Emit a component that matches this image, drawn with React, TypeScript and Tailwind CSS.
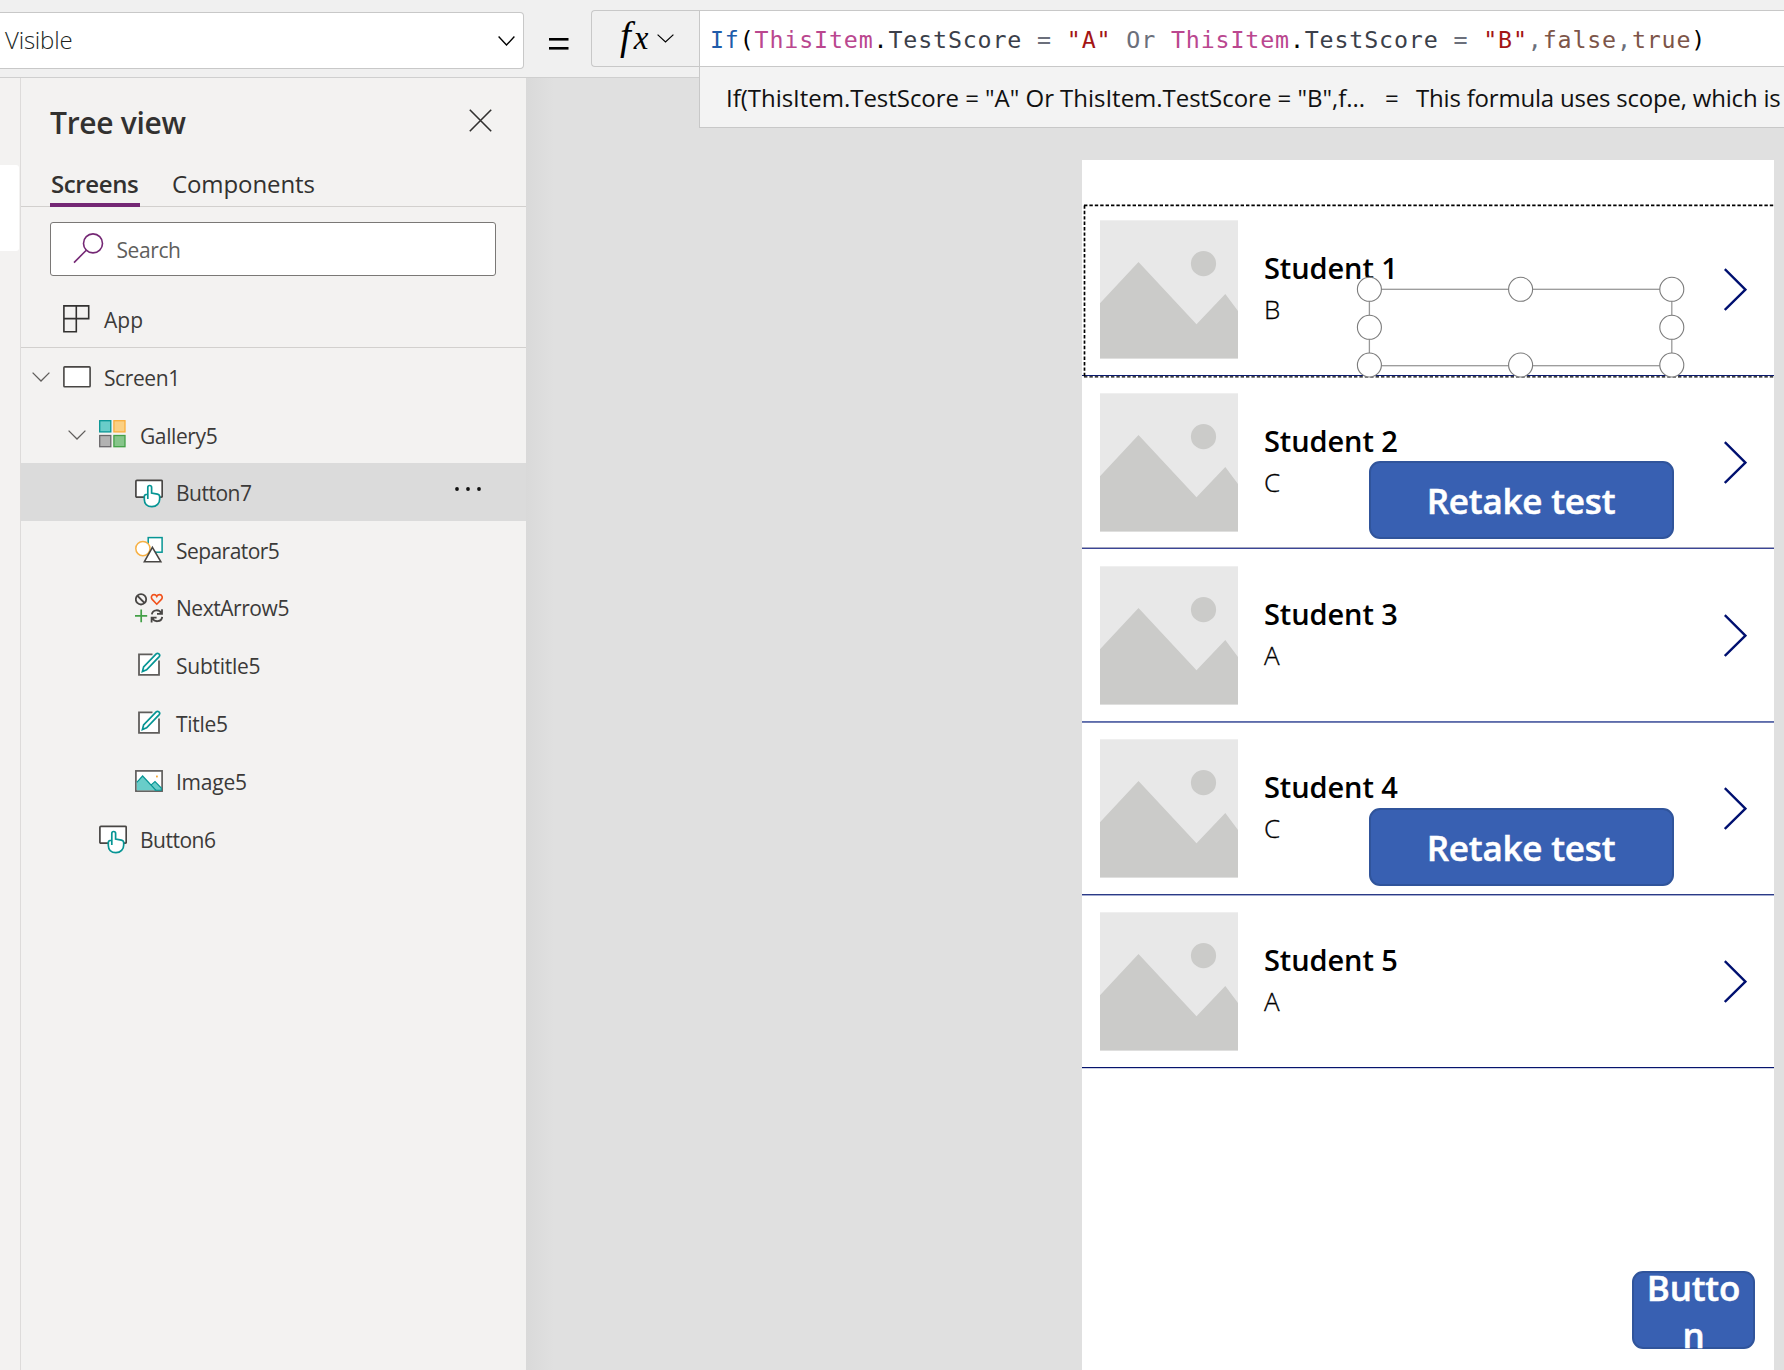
import React from "react";

function Chevron({ className = "", w = 18, h = 10, sw = 1.3 }: { className?: string; w?: number; h?: number; sw?: number }) {
  return (
    <svg className={className} width={w} height={h} viewBox={`0 0 ${w} ${h}`} fill="none" stroke="currentColor" strokeWidth={sw}>
      <path d={`M0.6 0.6 L${w / 2} ${h - 1} L${w - 0.6} 0.6`} />
    </svg>
  );
}

function ButtonIcon() {
  return (
    <svg className="translate-y-px" width="28" height="29" viewBox="0 0 28 29" fill="#fff">
      <rect x="0.9" y="1.4" width="26.3" height="16.8" rx="1" stroke="#484644" strokeWidth="1.7" />
      <path
        d="M12.8 20V8.4a1.9 1.9 0 0 1 3.8 0v5.6l5.8 1.2c1.4.3 2.3 1.2 2.3 2.6v2.2c0 4.2-3 7.7-7.8 7.7s-7.6-3.2-7.6-7.5v-2.6c0-1.7 1.5-2.6 3.5-2.3"
        stroke="#069594"
        strokeWidth="1.7"
      />
    </svg>
  );
}

function ShapesIcon() {
  return (
    <svg width="28" height="28" viewBox="0 0 28 28" fill="#fff">
      <rect x="13.2" y="1.6" width="13.9" height="14.6" stroke="#069594" strokeWidth="1.5" />
      <circle cx="7.9" cy="12.6" r="7.1" stroke="#f7b145" strokeWidth="1.5" />
      <path d="M17.4 11.4 L25.8 25.7 H9.4 Z" stroke="#484644" strokeWidth="1.6" />
    </svg>
  );
}

function IconsIcon() {
  return (
    <svg width="28" height="30" viewBox="0 0 28 30" fill="none">
      <circle cx="6" cy="6.3" r="5.2" stroke="#484644" strokeWidth="1.8" />
      <path d="M2.5 2.8 L9.6 10" stroke="#484644" strokeWidth="1.8" />
      <path
        d="M21.8 11.2 L17.2 6.4 C15.6 4.5 16.6 1.6 19 1.6 C20.4 1.6 21.3 2.4 21.8 3.4 C22.3 2.4 23.2 1.6 24.6 1.6 C27 1.6 28 4.5 26.4 6.4 Z"
        stroke="#f1511b"
        strokeWidth="1.6"
      />
      <path d="M6.2 16.6 V29.2 M0 22.8 H12.2" stroke="#43a047" strokeWidth="1.7" />
      <path
        d="M16.8 21.4 C17.6 16.2 24.4 16 26.2 20.2 M27 16.2 V20.8 H22 M27.2 24 C26.4 29.2 19.4 29.6 17.4 25.2 M16.6 29.4 V24.6 H21.6"
        stroke="#484644"
        strokeWidth="1.8"
      />
    </svg>
  );
}

function EditIcon({ className = "" }: { className?: string }) {
  return (
    <svg className={`ml-[3px] mr-[2px] ${className}`} width="23" height="25" viewBox="0 0 23 25">
      <path d="M14.5 2.4 H1 V22.9 H21 V8.5" fill="#fff" stroke="#605e5c" strokeWidth="1.8" />
      <path d="M4.4 19.6 L5.6 15 L18.2 1.9 C19.8 .3 22.8 2.4 21.2 4.6 L8.6 17.8 Z" fill="#fff" stroke="#069594" strokeWidth="1.7" />
    </svg>
  );
}

function ImageIcon() {
  return (
    <svg width="28" height="22" viewBox="0 0 28 22">
      <rect x="0.9" y="0.9" width="26.2" height="20.2" fill="#fff" stroke="#605e5c" strokeWidth="1.7" />
      <path d="M15.6 15.4 L20 11.6 L26.3 18 V20.2 H20 Z" fill="#69cdc9" stroke="#069594" strokeWidth="1.1" />
      <path d="M1.8 12.4 L7.6 6 L21 20.3 H1.8 Z" fill="#69cdc9" />
      <path d="M1.8 12.4 L7.6 6 L21 20.3" fill="none" stroke="#069594" strokeWidth="1.2" />
      <rect x="21" y="5.6" width="1.8" height="1.8" fill="#f7a531" />
    </svg>
  );
}

function GalleryIcon() {
  return (
    <svg className="-translate-y-px" width="28" height="28" viewBox="0 0 28 28" strokeWidth="1.3">
      <rect x="0.7" y="0.7" width="11.1" height="11.2" fill="#69cdc9" stroke="#069594" />
      <rect x="14.9" y="0.7" width="11.1" height="11.2" fill="#fbd083" stroke="#f9ae3c" />
      <rect x="0.7" y="15.5" width="11.1" height="11.2" fill="#b2b2b2" stroke="#69676a" />
      <rect x="14.9" y="15.5" width="11.1" height="11.2" fill="#86c58a" stroke="#43a047" />
    </svg>
  );
}

function ScreenIcon() {
  return (
    <svg width="28" height="22" viewBox="0 0 28 22">
      <rect x="0.9" y="0.9" width="26.2" height="19.8" rx="0.8" fill="#fff" stroke="#484644" strokeWidth="1.6" />
    </svg>
  );
}

function AppIcon() {
  return (
    <svg width="28" height="28" viewBox="0 0 28 28" fill="none" stroke="#323130" strokeWidth="1.6">
      <path d="M0.9 0.9 H25.7 V13.6 H0.9 Z M13.3 0.9 V26.7 H0.9 V0.9" />
    </svg>
  );
}

type Item = { label: string; icon: React.ReactNode; pad: string; chevron?: boolean; selected?: boolean; text: string };

const ITEMS: Item[] = [
  { label: "Screen1", icon: <ScreenIcon />, pad: "pl-[11px]", chevron: true, text: "ml-[13px] tracking-[-0.4px]" },
  { label: "Gallery5", icon: <GalleryIcon />, pad: "pl-[47px]", chevron: true, text: "ml-[13px] tracking-[-0.4px]" },
  { label: "Button7", icon: <ButtonIcon />, pad: "pl-[114px]", selected: true, text: "ml-[13px] tracking-[-0.5px]" },
  { label: "Separator5", icon: <ShapesIcon />, pad: "pl-[114px]", text: "ml-[13px] tracking-[-0.55px]" },
  { label: "NextArrow5", icon: <IconsIcon />, pad: "pl-[114px]", text: "ml-[13px] pb-px tracking-[-0.45px]" },
  { label: "Subtitle5", icon: <EditIcon className="-translate-y-px" />, pad: "pl-[114px]", text: "ml-[13px] tracking-[-0.25px]" },
  { label: "Title5", icon: <EditIcon />, pad: "pl-[114px]", text: "ml-[13px] tracking-[-0.3px]" },
  { label: "Image5", icon: <ImageIcon />, pad: "pl-[114px]", text: "ml-[13px] tracking-[-0.25px]" },
  { label: "Button6", icon: <ButtonIcon />, pad: "pl-[78px]", text: "ml-[13px] pt-px tracking-[-0.5px]" },
];

function TreeRow({ item }: { item: Item }) {
  return (
    <div className={`flex h-[57.7px] items-center pr-[44px] ${item.pad} ${item.selected ? "bg-[#dbdbdb]" : ""}`}>
      {item.chevron && <Chevron className="mr-[13px] text-[#605e5c]" />}
      {item.icon}
      <span className={`translate-y-px text-[21px] leading-[30px] text-[#3b3a39] ${item.text}`}>{item.label}</span>
      {item.selected && (
        <svg className="ml-auto -translate-y-[3px]" width="28" height="6" viewBox="0 0 28 6" fill="#111">
          <circle cx="3" cy="3" r="1.9" />
          <circle cx="14" cy="3" r="1.9" />
          <circle cx="25" cy="3" r="1.9" />
        </svg>
      )}
    </div>
  );
}

function TreePanel() {
  return (
    <aside className="flex w-[505px] shrink-0 flex-col bg-[#f3f2f1]">
      <div className="flex h-[86px] items-center justify-between pl-[29px] pr-[34px] pt-[3px]">
        <h2 className="text-[30px] font-semibold leading-[40px] tracking-[-0.3px] text-[#323130]">Tree view</h2>
        <svg className="-translate-y-[2px]" width="23" height="23" viewBox="0 0 23 23" fill="none" stroke="#323130" strokeWidth="1.6">
          <path d="M0.8 0.8 L22.2 22.2 M22.2 0.8 L0.8 22.2" />
        </svg>
      </div>
      <div className="flex h-[43px] gap-[32px] border-b border-[#d2d0ce] pl-[29px] text-[24px] leading-[40px] text-[#323130]">
        <div className="h-[43px] w-[90px] border-b-[4px] border-[#742774] pl-[1px] font-semibold tracking-[-0.4px]">Screens</div>
        <div className="tracking-[-0.1px]">Components</div>
      </div>
      <div className="ml-[29px] mt-[15px] flex h-[54px] w-[446px] items-center rounded-[3px] border border-[#7a7876] bg-white pl-[22px]">
        <svg className="-translate-y-px" width="31" height="31" viewBox="0 0 31 31" fill="none" stroke="#742774" strokeWidth="1.6">
          <circle cx="20" cy="10.4" r="9.5" />
          <path d="M13.3 17.2 L1 29.6" />
        </svg>
        <span className="ml-[12.5px] translate-y-px text-[21px] leading-[30px] tracking-[-0.4px] text-[#605e5c]">Search</span>
      </div>
      <div className="flex h-[72px] items-center border-b border-[#d2d0ce] pl-[42px] pt-[14px]">
        <AppIcon />
        <span className="ml-[13px] translate-y-px text-[21px] leading-[30px] text-[#3b3a39]">App</span>
      </div>
      {ITEMS.map((item) => (
        <TreeRow key={item.label} item={item} />
      ))}
    </aside>
  );
}

function FormulaBar() {
  return (
    <header className="relative z-10 flex h-[78px] shrink-0 border-b border-[#cfcfcf] bg-[#f0f0f0]">
      <div className="mt-[12px] flex h-[57px] w-[524px] items-center justify-between rounded-r-[4px] border border-l-0 border-[#c8c8c8] bg-white pl-[5px] pr-[8px]">
        <span className="-translate-y-px text-[24px] font-light leading-[34px] tracking-[-0.2px] text-[#201f1e]">Visible</span>
        <Chevron w={17} h={10} sw={1.4} className="text-black" />
      </div>
      <svg className="ml-[25px] mt-[37px]" width="20" height="15" viewBox="0 0 20 15" fill="#000">
        <rect x="0" y="1" width="19.5" height="2.6" />
        <rect x="0" y="10" width="19.5" height="2.6" />
      </svg>
      <div className="ml-[22px] mt-[10px] flex h-[57px] w-[108px] items-center rounded-l-[4px] border border-r-0 border-[#c8c8c8] bg-[#f0f0f0] pl-[28px]">
        <span className="w-[31px] -translate-y-[2px] whitespace-nowrap font-['Liberation_Serif',serif] text-[39px] italic leading-[44px] text-black">
          f<span className="ml-[3px] text-[33px]">x</span>
        </span>
        <Chevron w={17} h={9} sw={1.2} className="ml-[6px] text-black" />
      </div>
      <div className="relative mt-[10px] h-[57px] flex-1 border border-r-0 border-[#c8c8c8] bg-white">
        <div className="whitespace-pre pl-[10px] pt-[9px] font-['DejaVu_Sans_Mono',monospace] text-[23.3px] leading-[40px] tracking-[0.84px] text-[#3b3f4a]">
          <span className="text-[#1f5caa]">If</span>
          <span className="text-black">(</span>
          <span className="text-[#ba478f]">ThisItem</span>
          <span className="text-black">.</span>TestScore <span className="text-[#6b6f7b]">=</span>{" "}
          <span className="text-[#a31515]">"A"</span> <span className="text-[#6b6f7b]">Or</span>{" "}
          <span className="text-[#ba478f]">ThisItem</span>
          <span className="text-black">.</span>TestScore <span className="text-[#6b6f7b]">=</span>{" "}
          <span className="text-[#a31515]">"B"</span>
          <span className="text-[#6b6f7b]">,</span>
          <span className="text-[#7d5549]">false</span>
          <span className="text-[#6b6f7b]">,</span>
          <span className="text-[#7d5549]">true</span>
          <span className="text-black">)</span>
        </div>
        <div className="absolute -left-px right-0 top-[55px] flex h-[62px] items-center overflow-hidden whitespace-pre border-b border-l border-t border-[#c8c8c8] bg-[#f3f3f3] pl-[26px] pt-px text-[24px] leading-[34px] text-[#111]">
          <span className="w-[659px] tracking-[-0.03px]">If(ThisItem.TestScore = "A" Or ThisItem.TestScore = "B",f...</span>
          <span className="w-[31px]">=</span>
          <span className="tracking-[-0.2px]">This formula uses scope, which is</span>
        </div>
      </div>
    </header>
  );
}

function Placeholder() {
  return (
    <svg className="ml-[18px] mt-[17px] shrink-0" width="138" height="139" viewBox="0 0 138 139">
      <rect y="0.3" width="138" height="138.2" fill="#e8e8e8" />
      <path d="M0 83.3 L38.5 41.9 L96.5 104.2 L125.3 74.1 L138 91 V138.5 H0 Z" fill="#cbcbc9" />
      <circle cx="103.5" cy="43.7" r="12.6" fill="#cbcbc9" />
    </svg>
  );
}

const STUDENTS = [
  { name: "Student 1", score: "B", line: "border-[#0b1a6e]", top: "" },
  { name: "Student 2", score: "C", line: "border-[#3b4596] shadow-[0_-1px_0_#a3a6c0]", top: "top-[85px]" },
  { name: "Student 3", score: "A", line: "border-[#5c6cac] shadow-[0_1px_0_#7580b4]", top: "" },
  { name: "Student 4", score: "C", line: "border-[#2b3a86] shadow-[0_1px_0_#a3abd0]", top: "top-[86px]" },
  { name: "Student 5", score: "A", line: "border-[#06146c] shadow-[0_1px_0_#ccd0e4]", top: "" },
];

function GalleryRow({ name, score, line, top }: { name: string; score: string; line: string; top: string }) {
  return (
    <div className="relative flex h-[173px] flex-col">
      <div className="flex h-[172px]">
        <Placeholder />
        <div className="ml-[26px] flex-1 text-black">
          <div className="mt-[45px] text-[29px] font-semibold leading-[40px] tracking-[-0.1px]">{name}</div>
          <div className="mt-[2px] text-[26px] font-light leading-[38px] [-webkit-text-stroke:0.3px_black]">{score}</div>
        </div>
        <svg className="mr-[27px] mt-[65px]" width="23" height="44" viewBox="0 0 23 44" fill="none" stroke="#001070" strokeWidth="2.4">
          <path d="M0.8 1.2 L21.4 21.6 L0.8 42" />
        </svg>
      </div>
      <div className={`h-0 border-t ${line}`} />
      {score === "C" && (
        <button
          className={`absolute left-[286.5px] flex h-[78px] w-[305px] items-center justify-center rounded-[11px] border-2 border-[#30549b] bg-[#3860b2] text-[35px] font-semibold leading-[47px] tracking-[-0.2px] text-white [-webkit-text-stroke:0.5px_white] ${top}`}
        >
          Retake test
        </button>
      )}
    </div>
  );
}

function Selection() {
  const points = [
    [15.4, 13.3], [166.6, 13.3], [317.8, 13.3],
    [15.4, 51.3], [317.8, 51.3],
    [15.4, 89], [166.6, 89], [317.8, 89],
  ];
  return (
    <svg className="absolute left-[272px] top-[116px]" width="333" height="104" viewBox="0 0 333 104" fill="#fff" stroke="#7c7c7c" strokeWidth="1.1">
      <rect x="15.4" y="13.3" width="302.4" height="76.4" fill="none" stroke="#999" strokeWidth="1.3" />
      {points.map(([x, y]) => (
        <circle key={`${x}-${y}`} cx={x} cy={y} r="12" />
      ))}
    </svg>
  );
}

function Canvas() {
  return (
    <main className="flex flex-1 justify-end overflow-hidden bg-[linear-gradient(to_right,#d9d9d9,#e0e0e0_28px)] pr-[10px] pt-[82px]">
      <div className="relative flex w-[692px] flex-col bg-white pt-[43px]">
        {STUDENTS.map((s) => (
          <GalleryRow key={s.name} {...s} />
        ))}
        <svg className="absolute left-0 top-[43px]" width="692" height="176" viewBox="0 0 692 176" fill="none" stroke="#000" strokeWidth="1.7" strokeDasharray="3.4 2">
          <path d="M2 2.4 H692" />
          <path d="M2.5 2.4 V174" />
          <path d="M2 173.8 H692" strokeWidth="1.3" />
        </svg>
        <Selection />
        <button className="mb-[21px] ml-auto mr-[19px] mt-auto h-[78px] w-[123px] rounded-[11px] border-2 border-[#30549b] bg-[#3860b2] px-[12px] text-[35px] font-semibold leading-[47px] tracking-[-0.2px] text-white [-webkit-text-stroke:0.5px_white]">
          <span className="-mt-[9px] block">
            Butto
            <br />n
          </span>
        </button>
      </div>
    </main>
  );
}

export default function App() {
  return (
    <div className="flex h-[1370px] w-[1784px] flex-col overflow-hidden bg-[#e0e0e0] font-['Open_Sans',sans-serif]">
      <FormulaBar />
      <div className="flex min-h-0 flex-1">
        <div className="w-[21px] shrink-0 border-r border-[#dddbda] bg-[#f3f2f1] pt-[87px]">
          <div className="h-[86px] w-[19px] rounded-r-[3px] bg-white" />
        </div>
        <TreePanel />
        <Canvas />
      </div>
    </div>
  );
}
